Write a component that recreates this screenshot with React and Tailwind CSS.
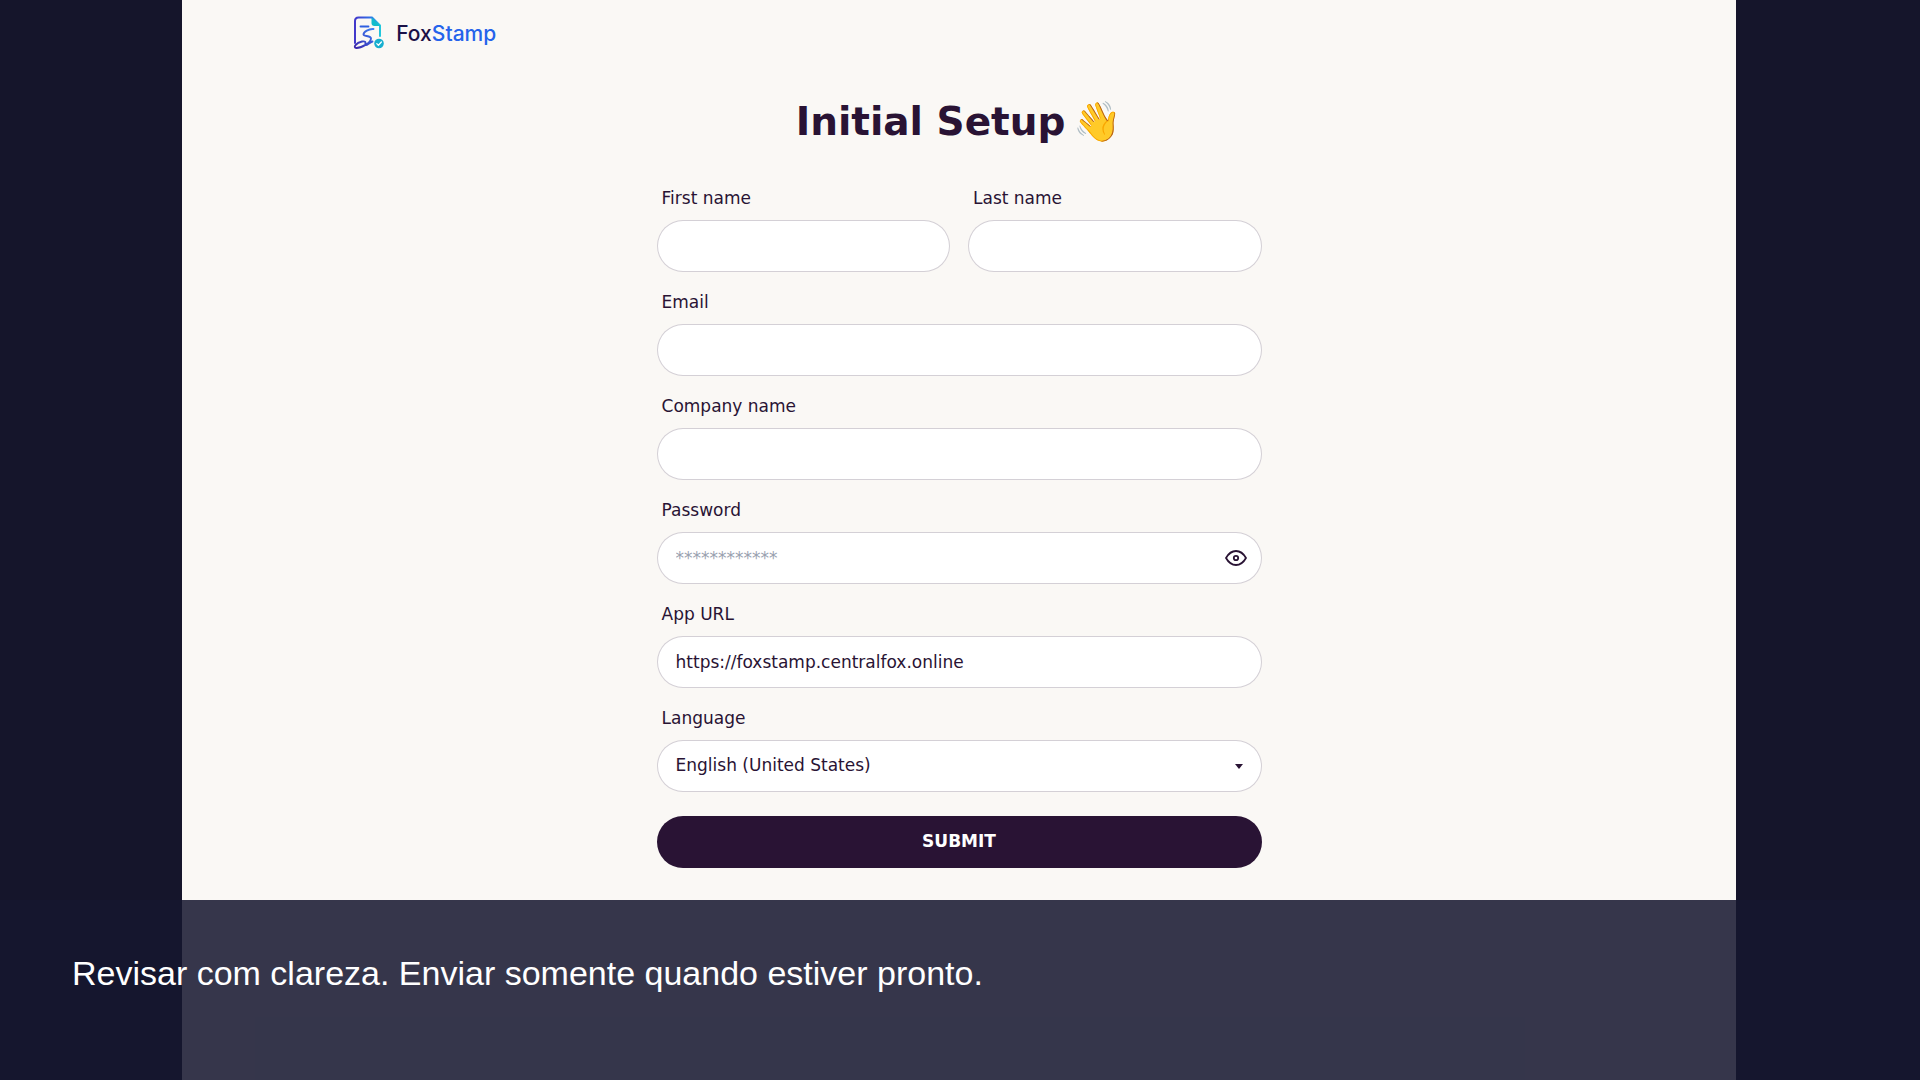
import { useState } from "react";

const inputClass = "w-full h-[52px] rounded-full border border-[#291334]/20 bg-white px-[18px] text-[17px] text-[#291334] placeholder:text-gray-400 outline-none";

const Field = ({ id, label, children }) => (
  <div>
    <label htmlFor={id} className="block h-9 pt-0.5 pl-[5px] text-[17px] leading-6">{label}</label>
    {children}
  </div>
);

const Logo = () => (
  <a href="/" className="flex items-center gap-[11px] pt-4">
    <svg width="32" height="34" viewBox="1 0 32 34" fill="none" strokeLinecap="round" strokeLinejoin="round">
      <defs>
        <linearGradient id="page" x1="0" y1="0" x2="1" y2="0">
          <stop offset="0" stopColor="#4338ca" />
          <stop offset="0.6" stopColor="#2f6fe8" />
          <stop offset="1" stopColor="#22c7dc" />
        </linearGradient>
        <linearGradient id="sign" x1="0" y1="1" x2="1" y2="0">
          <stop offset="0" stopColor="#3a22a8" />
          <stop offset="1" stopColor="#3b82f6" />
        </linearGradient>
      </defs>
      <path d="M3 27V5q0-3.500 3.500-3.500H20L28 9.500V20" stroke="url(#page)" strokeWidth="2" />
      <path d="M19.500 1.500L28 10h-5.500q-3 0-3-3z" fill="#12bccb" />
      <path d="M8.500 10.500h8" stroke="#2f5fe0" strokeWidth="1.800" />
      <path d="M21.500 13C17 12.500 11.500 16 11.500 18.500C11.500 20.500 19 19.500 19 22.500C19 27 9 32 4.500 32C0.500 31.500 4 27 10 25.500C16 24.500 12 29 14 29C15.500 29 17.500 26.500 20.500 25.500" stroke="url(#sign)" strokeWidth="1.900" />
      <circle cx="27" cy="27.500" r="4.800" fill="#16afcf" />
      <path d="M24.800 27.600l1.600 1.600 3-3.200" stroke="#fff" strokeWidth="1.300" />
    </svg>
    <span className="pt-0.5 font-['Inter',sans-serif] text-[21px] leading-7 font-medium text-[#1b1147]">Fox<span className="text-[#2563eb]">Stamp</span></span>
  </a>
);

const EyeIcon = () => (
  <svg width="24" height="24" viewBox="0 0 24 24" fill="none" stroke="currentColor" strokeWidth="1.800" strokeLinecap="round" strokeLinejoin="round">
    <circle cx="12" cy="12" r="2.200" />
    <path d="M22 12c-2.667 4.667-6 7-10 7s-7.333-2.333-10-7c2.667-4.667 6-7 10-7s7.333 2.333 10 7" />
  </svg>
);

export default function App() {
  const [showPassword, setShowPassword] = useState(false);
  const [appUrl, setAppUrl] = useState("https://foxstamp.centralfox.online");

  return (
    <div className="relative min-h-screen bg-[#15152b] pl-[9.5%] pr-[9.6%] font-['DejaVu_Sans',sans-serif]">
      <div className="min-h-screen bg-[#faf8f5] pb-[212px] text-[#291334]">
        <header className="flex px-[11%]">
          <Logo />
        </header>
        <main className="mx-auto max-w-[605px] pt-12">
          <h1 className="flex justify-center gap-2 text-[39px] leading-12 font-bold">
            <span>Initial Setup</span>
            <span>👋</span>
          </h1>
          <form className="mt-[38px] space-y-4" onSubmit={e => e.preventDefault()}>
            <div className="grid grid-cols-2 gap-[18px]">
              <Field id="first_name" label="First name">
                <input id="first_name" type="text" className={inputClass} />
              </Field>
              <Field id="last_name" label="Last name">
                <input id="last_name" type="text" className={inputClass} />
              </Field>
            </div>
            <Field id="email" label="Email">
              <input id="email" type="email" className={inputClass} />
            </Field>
            <Field id="company" label="Company name">
              <input id="company" type="text" className={inputClass} />
            </Field>
            <Field id="password" label="Password">
              <div className="relative">
                <input id="password" type={showPassword ? "text" : "password"} placeholder="************" className={inputClass} />
                <button type="button" aria-label="Show password" onClick={() => setShowPassword(!showPassword)} className="absolute inset-y-0 right-3.5">
                  <EyeIcon />
                </button>
              </div>
            </Field>
            <Field id="app_url" label="App URL">
              <input id="app_url" type="text" value={appUrl} onChange={e => setAppUrl(e.target.value)} className={inputClass} />
            </Field>
            <Field id="language" label="Language">
              <div className="relative">
                <select id="language" className={`${inputClass} appearance-none`}>
                  <option>English (United States)</option>
                </select>
                <svg width="8" height="5" viewBox="0 0 8 5" className="pointer-events-none absolute top-6 right-[19px]" fill="currentColor">
                  <path d="M0 0h8L4 5z" />
                </svg>
              </div>
            </Field>
            <button className="mt-2 h-[52px] w-full rounded-full bg-[#291334] text-[17px] font-bold text-white uppercase">Submit</button>
          </form>
        </main>
      </div>
      <div className="absolute inset-x-0 bottom-0 h-[180px] bg-[#15162f]/86 px-[72px] pt-[53px]">
        <p className="font-['Liberation_Sans',sans-serif] text-[34px] leading-10 text-white">Revisar com clareza. Enviar somente quando estiver pronto.</p>
      </div>
    </div>
  );
}
